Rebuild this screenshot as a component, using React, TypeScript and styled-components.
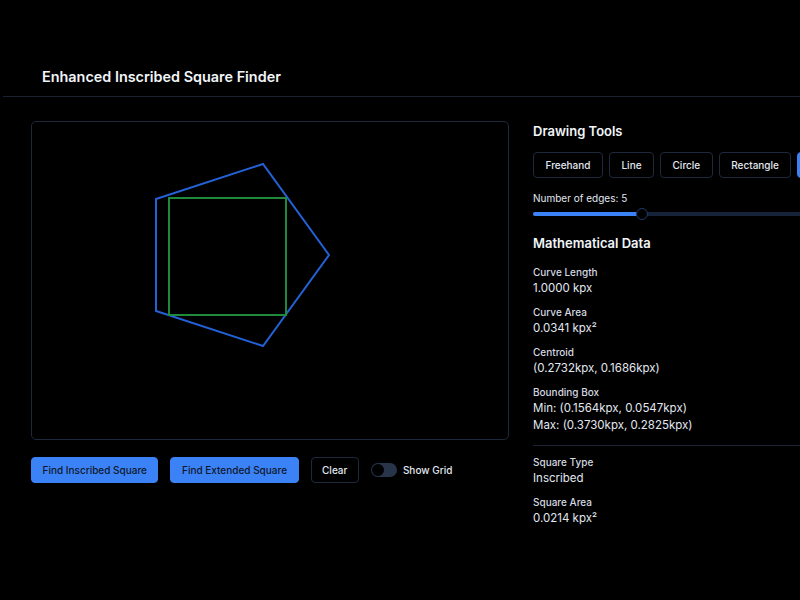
import React from "react";
import styled, { createGlobalStyle } from "styled-components";

const Global = createGlobalStyle`
  html, body { margin: 0; padding: 0; background: #000; overflow: hidden; }
  body { font-family: Inter, "Noto Sans", sans-serif; color: #e2e8f0; }
`;

const Page = styled.div`
  width: 800px;
  height: 600px;
  overflow: hidden;
  background: #000;
  padding-top: 56px;
  box-sizing: border-box;
`;

const Header = styled.header`
  margin-left: 3px;
  height: 40px;
  display: flex;
  align-items: center;
  padding-left: 39px;
  border-bottom: 1px solid #1a2130;
  width: 900px;
`;

const Title = styled.h1`
  margin: 0;
  font-size: 14.4px;
  font-weight: 600;
  color: #f1f5f9;
`;

const Main = styled.main`
  display: grid;
  grid-template-columns: 478px 320px;
  column-gap: 24px;
  padding: 24px 0 0 31px;
`;

const LeftCol = styled.div`
  display: flex;
  flex-direction: column;
  gap: 17px;
`;

const Canvas = styled.div`
  width: 478px;
  height: 319px;
  box-sizing: border-box;
  border: 1px solid #1e293b;
  border-radius: 5px;
  background: #000;
  overflow: hidden;
`;

const Controls = styled.div`
  display: flex;
  align-items: center;
  gap: 12px;
`;

const Button = styled.button<{ $variant?: "primary" | "outline" }>`
  height: 26px;
  padding: 0 10.5px;
  border-radius: 4px;
  font-family: Inter, sans-serif;
  font-size: 10px;
  font-weight: 500;
  cursor: pointer;
  box-sizing: border-box;
  white-space: nowrap;
  ${(p) =>
    p.$variant === "primary"
      ? `background:#3b82f6;color:#0f172a;border:1px solid #3b82f6;`
      : `background:#000;color:#e2e8f0;border:1px solid #1e293b;`}
`;

const ToggleWrap = styled.label`
  display: flex;
  align-items: center;
  gap: 6px;
  font-size: 10px;
  font-weight: 500;
  color: #e2e8f0;
`;

const Track = styled.span`
  width: 26px;
  height: 14px;
  border-radius: 7px;
  background: #273449;
  display: flex;
  align-items: center;
  padding: 1px;
  box-sizing: border-box;
`;

const Thumb = styled.span`
  width: 12px;
  height: 12px;
  border-radius: 50%;
  background: #000;
`;

const RightCol = styled.div`
  display: flex;
  flex-direction: column;
  padding-top: 2px;
`;

const SectionTitle = styled.h2<{ $mt?: number }>`
  margin: ${(p) => p.$mt ?? 0}px 0 0 0;
  font-size: 13px;
  font-weight: 600;
  color: #f1f5f9;
  line-height: 16px;
`;

const ToolRow = styled.div`
  display: flex;
  gap: 6px;
  margin-top: 13px;
`;

const ToolButton = styled(Button)`
  height: 26px;
  padding: 0 11.5px;
`;

const SliderLabel = styled.div`
  font-size: 10px;
  margin-top: 14px;
  color: #e2e8f0;
  line-height: 13px;
`;

const SliderTrack = styled.div`
  position: relative;
  margin-top: 7px;
  height: 4px;
  border-radius: 2px;
  background: #16213a;
  width: 300px;
`;

const SliderFill = styled.div`
  height: 100%;
  border-radius: 2px;
  background: #3b82f6;
`;

const SliderThumb = styled.div`
  position: absolute;
  top: 50%;
  width: 10px;
  height: 10px;
  border-radius: 50%;
  background: #000;
  border: 1px solid #1e3a6a;
  transform: translate(-50%, -50%);
`;

const DataList = styled.div<{ $mt?: number }>`
  display: flex;
  flex-direction: column;
  gap: 8px;
  margin-top: ${(p) => p.$mt ?? 0}px;
`;

const DataItem = styled.div`
  display: flex;
  flex-direction: column;
`;

const DataLabel = styled.div`
  font-size: 10px;
  font-weight: 500;
  color: #d4d9e1;
  line-height: 15px;
`;

const DataValue = styled.div`
  font-size: 11.5px;
  color: #e2e8f0;
  line-height: 17px;
`;

const Separator = styled.div`
  height: 1px;
  background: #1a2130;
  margin: 11px 0 9px 0;
  width: 300px;
`;

const data1 = [
  { label: "Curve Length", values: ["1.0000 kpx"] },
  { label: "Curve Area", values: ["0.0341 kpx²"] },
  { label: "Centroid", values: ["(0.2732kpx, 0.1686kpx)"] },
  {
    label: "Bounding Box",
    values: ["Min: (0.1564kpx, 0.0547kpx)", "Max: (0.3730kpx, 0.2825kpx)"],
  },
];

const data2 = [
  { label: "Square Type", values: ["Inscribed"] },
  { label: "Square Area", values: ["0.0214 kpx²"] },
];

const DataBlock = ({
  items,
  mt,
}: {
  items: { label: string; values: string[] }[];
  mt?: number;
}) => (
  <DataList $mt={mt}>
    {items.map((it) => (
      <DataItem key={it.label}>
        <DataLabel>{it.label}</DataLabel>
        {it.values.map((v) => (
          <DataValue key={v}>{v}</DataValue>
        ))}
      </DataItem>
    ))}
  </DataList>
);

export default function App() {
  const sliderPct = 36.3;
  return (
    <>
      <Global />
      <Page>
        <Header>
          <Title>Enhanced Inscribed Square Finder</Title>
        </Header>
        <Main>
          <LeftCol>
            <Canvas>
              <svg width="476" height="317" viewBox="1 1 476 317">
                <polygon
                  points="125,78 232,43 298,134 232,225 125,190"
                  fill="none"
                  stroke="#2461d6"
                  strokeWidth="2"
                />
                <rect
                  x="138"
                  y="77"
                  width="117"
                  height="117"
                  fill="none"
                  stroke="#1f8a3c"
                  strokeWidth="2"
                />
              </svg>
            </Canvas>
            <Controls>
              <Button $variant="primary">Find Inscribed Square</Button>
              <Button $variant="primary">Find Extended Square</Button>
              <Button $variant="outline">Clear</Button>
              <ToggleWrap>
                <Track>
                  <Thumb />
                </Track>
                Show Grid
              </ToggleWrap>
            </Controls>
          </LeftCol>
          <RightCol>
            <SectionTitle>Drawing Tools</SectionTitle>
            <ToolRow>
              <ToolButton $variant="outline">Freehand</ToolButton>
              <ToolButton $variant="outline">Line</ToolButton>
              <ToolButton $variant="outline">Circle</ToolButton>
              <ToolButton $variant="outline">Rectangle</ToolButton>
              <ToolButton $variant="primary">Polygon</ToolButton>
            </ToolRow>
            <SliderLabel>Number of edges: 5</SliderLabel>
            <SliderTrack>
              <SliderFill style={{ width: `${sliderPct}%` }} />
              <SliderThumb style={{ left: `${sliderPct}%` }} />
            </SliderTrack>
            <SectionTitle $mt={19}>Mathematical Data</SectionTitle>
            <DataBlock items={data1} mt={14} />
            <Separator />
            <DataBlock items={data2} />
          </RightCol>
        </Main>
      </Page>
    </>
  );
}
